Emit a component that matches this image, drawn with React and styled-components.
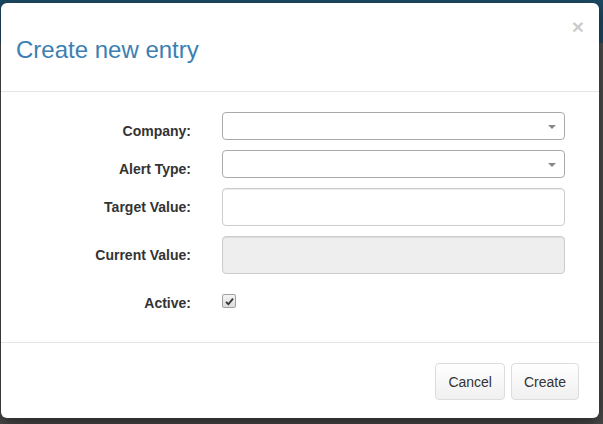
import React from "react";
import styled, { createGlobalStyle } from "styled-components";

const GlobalStyle = createGlobalStyle`
  html, body {
    margin: 0;
    padding: 0;
  }
  body {
    font-family: "Liberation Sans", Arial, sans-serif;
    font-size: 14px;
    color: #333;
    background: linear-gradient(to bottom, #1d4a65 0, #1d4a65 43px, #4f4f4f 43px, #4a4a4a 100%);
    min-height: 424px;
    overflow: hidden;
  }
`;

const Backdrop = styled.div`
  width: 603px;
  height: 424px;
  padding: 3px 0 0 1px;
  box-sizing: border-box;
`;

const Modal = styled.div`
  width: 598px;
  height: 415px;
  background: #fff;
  border-radius: 6px;
  box-shadow: 0 5px 15px rgba(0, 0, 0, 0.5);
  display: flex;
  flex-direction: column;
  overflow: hidden;
`;

const Header = styled.div`
  display: flex;
  align-items: flex-start;
  padding: 13px 15px 0 15px;
  height: 75px;
  border-bottom: 1px solid #e5e5e5;
`;

const Title = styled.h3`
  flex: 1;
  margin: 21px 0 0 0;
  font-size: 24px;
  font-weight: normal;
  line-height: 1.1;
  color: #3b7fb3;
`;

const Close = styled.button`
  border: none;
  background: none;
  padding: 0;
  margin: 0;
  font-family: "Liberation Sans", Arial, sans-serif;
  font-size: 21px;
  font-weight: bold;
  line-height: 1;
  color: #000;
  opacity: 0.2;
  cursor: pointer;
`;

const Body = styled.form`
  display: flex;
  flex-direction: column;
  gap: 10px;
  padding: 20px 34px 30px 0;
`;

const Row = styled.div`
  display: grid;
  grid-template-columns: 190px 1fr;
  column-gap: 31px;
  align-items: start;
`;

const Label = styled.label`
  height: 28px;
  box-sizing: border-box;
  text-align: right;
  font-weight: bold;
  font-size: 14px;
  line-height: 20px;
  padding-top: 9px;
  color: #333;
`;

const SelectBox = styled.div`
  position: relative;
  height: 28px;
  border: 1px solid #aaa;
  border-radius: 4px;
  box-sizing: border-box;
  background: #fff;

  &::after {
    content: "";
    position: absolute;
    right: 8px;
    top: 12px;
    border-left: 4px solid transparent;
    border-right: 4px solid transparent;
    border-top: 4px solid #888;
  }
`;

const TextInput = styled.input`
  height: ${(p) => p.$h || 38}px;
  box-sizing: border-box;
  width: 100%;
  border: 1px solid #ccc;
  border-radius: 4px;
  background: ${(p) => (p.disabled ? "#eee" : "#fff")};
  box-shadow: inset 0 1px 1px rgba(0, 0, 0, 0.075);
  font-family: inherit;
  font-size: 14px;
  padding: 6px 12px;
  outline: none;
`;

const CheckBox = styled.span`
  display: inline-flex;
  align-items: center;
  justify-content: center;
  width: 12px;
  height: 12px;
  margin-top: 10px;
  border: 1px solid #a0a0a0;
  border-radius: 2px;
  background: linear-gradient(#f4f4f4, #dcdcdc);
`;

const Footer = styled.div`
  display: flex;
  justify-content: flex-end;
  gap: 6px;
  padding: 20px 20px 0 0;
  border-top: 1px solid #e5e5e5;
`;

const Button = styled.button`
  height: 37px;
  padding: 0 12px;
  font-family: "Liberation Sans", Arial, sans-serif;
  font-size: 14px;
  color: #333;
  border: 1px solid #dcdcdc;
  border-radius: 4px;
  background: linear-gradient(to bottom, #ffffff 0%, #f0f0f0 100%);
  cursor: pointer;
`;

const Check = () => (
  <svg width="9" height="9" viewBox="0 0 9 9">
    <path d="M1 4.8 L3.4 7.2 L8 1.6" fill="none" stroke="#333" strokeWidth="1.8" />
  </svg>
);

export default function App() {
  return (
    <>
      <GlobalStyle />
      <Backdrop>
        <Modal>
          <Header>
            <Title>Create new entry</Title>
            <Close type="button">×</Close>
          </Header>
          <Body>
            <Row>
              <Label>Company:</Label>
              <SelectBox />
            </Row>
            <Row>
              <Label>Alert Type:</Label>
              <SelectBox />
            </Row>
            <Row>
              <Label>Target Value:</Label>
              <TextInput type="text" $h={38} />
            </Row>
            <Row>
              <Label>Current Value:</Label>
              <TextInput type="text" disabled $h={38} />
            </Row>
            <Row>
              <Label>Active:</Label>
              <div>
                <CheckBox>
                  <Check />
                </CheckBox>
              </div>
            </Row>
          </Body>
          <Footer>
            <Button type="button">Cancel</Button>
            <Button type="button">Create</Button>
          </Footer>
        </Modal>
      </Backdrop>
    </>
  );
}
